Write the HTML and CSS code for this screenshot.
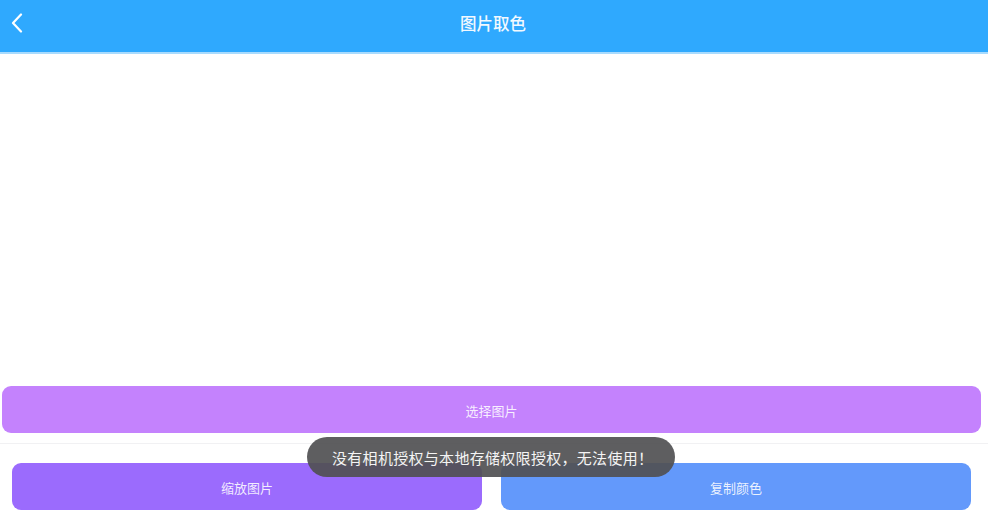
FILE: index.html
```html
<!DOCTYPE html>
<html lang="zh-CN">
<head>
<meta charset="utf-8">
<title>图片取色</title>
<link rel="stylesheet" href="styles.css">
</head>
<body>
<div class="app">
  <header class="topbar">
    <button class="back" aria-label="返回">
      <svg width="12" height="20" viewBox="0 0 12 20"><path d="M10 1.5 L2 10 L10 18.5" fill="none" stroke="#ffffff" stroke-width="2.2" stroke-linecap="round" stroke-linejoin="round"/></svg>
    </button>
    <h1 class="title">图片取色</h1>
    <span class="spacer"></span>
  </header>
  <main class="canvas"></main>
  <div class="select-row">
    <button class="btn btn-select">选择图片</button>
  </div>
  <div class="divider"></div>
  <footer class="actions">
    <button class="btn btn-zoom">缩放图片</button>
    <button class="btn btn-copy">复制颜色</button>
  </footer>
  <div class="toast">没有相机授权与本地存储权限授权，无法使用！</div>
</div>
</body>
</html>
```
FILE: styles.css
```css
* { box-sizing: border-box; }
html, body { margin: 0; padding: 0; background: #ffffff; }
body {
  font-family: "Noto Sans CJK SC", "Noto Sans", "Liberation Sans", sans-serif;
  width: 988px;
  height: 525px;
  overflow: hidden;
}
.app {
  position: relative;
  width: 988px;
  height: 525px;
  display: flex;
  flex-direction: column;
}
.topbar {
  height: 54px;
  background: #2fa9fe;
  border-bottom: 2px solid #a8dbfe;
  display: grid;
  grid-template-columns: 1fr auto 1fr;
  align-items: center;
  padding: 0 0 0 10px;
}
.back {
  justify-self: start;
  background: none;
  border: 0;
  padding: 0;
  width: 14px;
  height: 22px;
  display: flex;
  align-items: center;
  justify-content: center;
  margin-top: -6px;
}
.title {
  margin: -7px 0 0 -12px;
  font-size: 16.5px;
  font-weight: 500;
  color: #f2f9ff;
}
.canvas {
  height: 332px;
  background: #ffffff;
}
.select-row {
  padding: 0 7px 0 2px;
}
.btn {
  border: 0;
  height: 47px;
  border-radius: 9px;
  font-family: inherit;
  font-size: 13px;
  color: rgba(255, 255, 255, 0.88);
  display: flex;
  align-items: center;
  justify-content: center;
  padding: 0;
  padding-top: 2px;
}
.btn-select {
  width: 100%;
  background: #c482fd;
}
.divider {
  margin-top: 10px;
  height: 1px;
  background: #f1f1f3;
}
.actions {
  display: flex;
  gap: 19px;
  padding: 19px 17px 15px 12px;
}
.actions .btn { flex: 1; }
.btn-zoom { background: #9b6bfd; }
.btn-copy { background: #6399fb; }
.toast {
  position: absolute;
  left: 307px;
  top: 437px;
  width: 368px;
  height: 40px;
  border-radius: 20px;
  background: rgba(80, 80, 82, 0.92);
  color: #f4f4f4;
  font-size: 15px;
  display: flex;
  align-items: center;
  padding-left: 25px;
  white-space: nowrap;
  letter-spacing: 0.3px;
}
```
